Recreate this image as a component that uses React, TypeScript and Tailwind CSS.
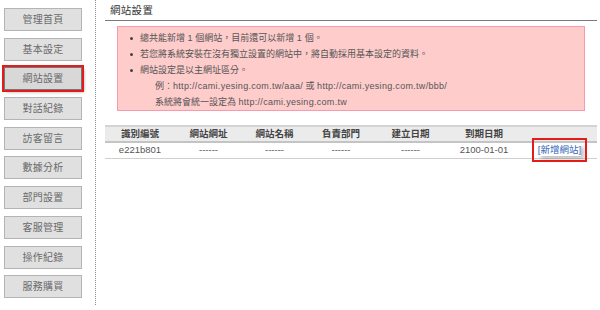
import React from "react";

const MENU = ["管理首頁", "基本設定", "網站設置", "對話紀錄", "訪客留言", "數據分析", "部門設置", "客服管理", "操作紀錄", "服務購買"];

const COLS = ["識別編號", "網站網址", "網站名稱", "負責部門", "建立日期", "到期日期", ""];

const FONT = { fontFamily: '"Liberation Sans", Arial, "Noto Sans CJK TC", sans-serif' };

function Bullet({ children }: { children: React.ReactNode }) {
  return (
    <div className="flex items-center">
      <span className="w-[3px] h-[3px] rounded-full bg-[#444] ml-[12px] mr-[7px] shrink-0" />
      <span>{children}</span>
    </div>
  );
}

function Url({ children }: { children: React.ReactNode }) {
  return <span className="tracking-[0.3px]">{children}</span>;
}

export default function App() {
  return (
    <div className="w-[600px] h-[310px] bg-white flex" style={FONT}>
      {/* side menu */}
      <div className="w-[96px] h-[305px] border-r border-dotted border-[#8a8a8a] pt-[8px] pl-[4px] flex flex-col gap-[6.7px]">
        {MENU.map((m) => {
          const active = m === "網站設置";
          return (
            <div
              key={m}
              className={
                "w-[78px] h-[23px] shrink-0 flex items-center justify-center text-[10px] tracking-[0.3px] text-[#6a6a6a] border " +
                (active
                  ? "bg-[#d8d8d8] border-[#777] outline-2 outline-[#e41b1b] shadow-[2px_2px_3px_rgba(0,0,0,0.35)]"
                  : "bg-[#e0e0e0] border-[#b4b4b4]")
              }
            >
              {m}
            </div>
          );
        })}
      </div>

      {/* main */}
      <div className="flex-1 pl-[9px] pr-[3px]">
        <div className="h-[21px] border-b border-[#7a7a7a] pl-[5px] pt-[4px] text-[10.5px] leading-[12px] tracking-[0.3px] text-[#333]">
          網站設置
        </div>

        <div className="mt-[5px] mx-[12px] h-[85px] bg-[#ffcccc] border border-[#f59aaf] pt-[3px] text-[9px] leading-[16px] text-[#555]">
          <Bullet>
            總共能新增 <Url>1</Url> 個網站，目前還可以新增 <Url>1</Url> 個。
          </Bullet>
          <Bullet>若您將系統安裝在沒有獨立設置的網站中，將自動採用基本設定的資料。</Bullet>
          <Bullet>網站設定是以主網址區分。</Bullet>
          <div className="pl-[37px]">
            例：<Url>http://cami.yesing.com.tw/aaa/</Url> 或 <Url>http://cami.yesing.com.tw/bbb/</Url>
          </div>
          <div className="pl-[37px]">
            系統將會統一設定為 <Url>http://cami.yesing.com.tw</Url>
          </div>
        </div>

        <div className="mt-[14px] w-[492px]">
          <div className="grid grid-cols-[70px_67px_65px_68px_71px_76px_75px] h-[18px] items-center bg-[#ebebeb] border-t-2 border-[#d4d4d4] border-b-2 border-b-[#c4c4c4] text-[9.5px] font-bold text-[#444]">
            {COLS.map((c, i) => (
              <div key={i} className="text-center">
                {c}
              </div>
            ))}
          </div>
          <div className="grid grid-cols-[70px_67px_65px_68px_71px_76px_75px] h-[16px] items-center border-b border-[#cfcfcf] text-[9.5px] text-[#555]">
            <div className="text-center">e221b801</div>
            <div className="text-center">------</div>
            <div className="text-center">------</div>
            <div className="text-center">------</div>
            <div className="text-center">------</div>
            <div className="text-center">2100-01-01</div>
            <div className="text-center">
              <span className="inline-block leading-[12px] text-[#3366bb] outline-2 outline-offset-[4px] outline-[#e41b1b] shadow-[3px_3px_4px_rgba(0,0,0,0.25)]">
                [新增網站]
              </span>
            </div>
          </div>
        </div>
      </div>
    </div>
  );
}
